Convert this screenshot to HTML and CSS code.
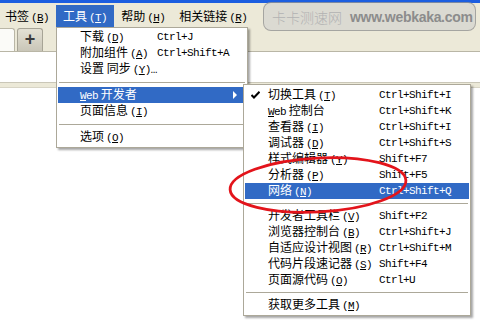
FILE: index.html
```html
<!DOCTYPE html>
<html>
<head>
    <meta charset="utf-8">
    <title>工具 - Web 开发者 - 网络</title>
    <link rel="stylesheet" href="styles.css">
</head>
<body>
    <div class="window">
        <div class="titlebar"></div>
        <div class="menubar">
            <span class="menubar__item">书签<span class="key">(<u>B</u>)</span></span>
            <span class="menubar__item menubar__item--open">工具<span class="key">(<u>T</u>)</span></span>
            <span class="menubar__item">帮助<span class="key">(<u>H</u>)</span></span>
            <span class="menubar__item">相关链接<span class="key">(<u>R</u>)</span></span>
        </div>
        <div class="tabbar">
            <div class="tab"></div>
            <div class="newtab">+</div>
        </div>
        <div class="navbar"></div>
        <div class="toolbar-edge"></div>
        <div class="content"></div>

        <div class="watermark">
            <span class="watermark__cn">卡卡测速网</span>
            <span class="watermark__url">www.webkaka.com</span>
        </div>

        <ul class="menu menu--tools">
            <li class="menu__row"><span class="menu__label">下载<span class="key">(<u>D</u>)</span></span><span class="menu__accel">Ctrl+J</span></li>
            <li class="menu__row"><span class="menu__label">附加组件<span class="key">(<u>A</u>)</span></span><span class="menu__accel">Ctrl+Shift+A</span></li>
            <li class="menu__row"><span class="menu__label menu__label--wide">设置 同步<span class="key">(<u>Y</u>)…</span></span></li>
            <li class="menu__sep"></li>
            <li class="menu__row menu__row--active"><span class="menu__label"><span class="key key--lead"><u>W</u>eb</span> 开发者</span><span class="menu__arrow"></span></li>
            <li class="menu__row"><span class="menu__label">页面信息<span class="key">(<u>I</u>)</span></span></li>
            <li class="menu__sep"></li>
            <li class="menu__row"><span class="menu__label">选项<span class="key">(<u>O</u>)</span></span></li>
        </ul>

        <ul class="menu menu--dev">
            <li class="menu__row"><span class="menu__check"><svg width="9" height="8" viewBox="0 0 9 8"><path d="M0.5 4 L3 6.5 L8.5 0.8" fill="none" stroke="#000" stroke-width="2"/></svg></span><span class="menu__label">切换工具<span class="key">(<u>T</u>)</span></span><span class="menu__accel">Ctrl+Shift+I</span></li>
            <li class="menu__row"><span class="menu__label"><span class="key key--lead"><u>W</u>eb</span> 控制台</span><span class="menu__accel">Ctrl+Shift+K</span></li>
            <li class="menu__row"><span class="menu__label">查看器<span class="key">(<u>I</u>)</span></span><span class="menu__accel">Ctrl+Shift+I</span></li>
            <li class="menu__row"><span class="menu__label">调试器<span class="key">(<u>D</u>)</span></span><span class="menu__accel">Ctrl+Shift+S</span></li>
            <li class="menu__row"><span class="menu__label">样式编辑器<span class="key">(<u>Y</u>)</span></span><span class="menu__accel">Shift+F7</span></li>
            <li class="menu__row"><span class="menu__label">分析器<span class="key">(<u>P</u>)</span></span><span class="menu__accel">Shift+F5</span></li>
            <li class="menu__row menu__row--active"><span class="menu__label">网络<span class="key">(<u>N</u>)</span></span><span class="menu__accel">Ctrl+Shift+Q</span></li>
            <li class="menu__sep"></li>
            <li class="menu__row"><span class="menu__label">开发者工具栏<span class="key">(<u>V</u>)</span></span><span class="menu__accel">Shift+F2</span></li>
            <li class="menu__row"><span class="menu__label">浏览器控制台<span class="key">(<u>B</u>)</span></span><span class="menu__accel">Ctrl+Shift+J</span></li>
            <li class="menu__row"><span class="menu__label">自适应设计视图<span class="key">(<u>R</u>)</span></span><span class="menu__accel">Ctrl+Shift+M</span></li>
            <li class="menu__row"><span class="menu__label">代码片段速记器<span class="key">(<u>S</u>)</span></span><span class="menu__accel">Shift+F4</span></li>
            <li class="menu__row"><span class="menu__label">页面源代码<span class="key">(<u>O</u>)</span></span><span class="menu__accel">Ctrl+U</span></li>
            <li class="menu__sep"></li>
            <li class="menu__row"><span class="menu__label menu__label--wide">获取更多工具<span class="key">(<u>M</u>)</span></span></li>
        </ul>

        <svg class="mark" width="480" height="323" viewBox="0 0 480 323">
            <ellipse cx="318" cy="185" rx="88" ry="27" transform="rotate(-3 318 185)" fill="none" stroke="#e3141b" stroke-width="2.8"/>
        </svg>
    </div>
</body>
</html>
```

FILE: styles.css
```css
* {
    box-sizing: border-box;
}

html, body {
    margin: 0;
    padding: 0;
}

body {
    width: 480px;
    height: 323px;
    overflow: hidden;
    background: #fff;
    font: 12px/16px "Noto Sans CJK SC", "Noto Sans", sans-serif;
    color: #000;
}

.window {
    position: relative;
    display: flex;
    flex-direction: column;
    height: 323px;
}

.titlebar {
    height: 3px;
    background: #1c5ee0;
}

.menubar {
    display: flex;
    align-items: flex-end;
    height: 24px;
    background: #ece9d8;
}

.menubar__item {
    height: 22px;
    padding: 0 7px;
    line-height: 21px;
    white-space: nowrap;
}

.menubar__item:first-child {
    margin-left: -2px;
}

.menubar__item--open {
    background: #316ac5;
    color: #fff;
}

.key {
    margin-left: 2px;
    font-family: "Liberation Mono", monospace;
    font-size: 11px;
    letter-spacing: -0.6px;
}

.key--lead {
    margin-left: 0;
}

.tabbar {
    display: flex;
    align-items: flex-end;
    gap: 2px;
    height: 25px;
    background: #ece9d8;
    border-bottom: 1px solid #b9b6a6;
}

.tab {
    width: 15px;
    height: 23px;
    background: #fbfbf8;
    border: 1px solid #b9b6a6;
    border-left: 0;
    border-bottom: 0;
    border-radius: 0 3px 0 0;
}

.newtab {
    width: 26px;
    height: 23px;
    background: linear-gradient(#e4e1d4, #c9c6b8);
    border: 1px solid #a7a496;
    border-bottom: 0;
    border-radius: 3px 3px 0 0;
    color: #3a3a3a;
    font: bold 18px/21px "Liberation Sans", sans-serif;
    text-align: center;
}

.navbar {
    height: 30px;
    background: #fff;
}

.toolbar-edge {
    height: 6px;
    background: #ece9d8;
    border-top: 1px solid #cac7b8;
    border-bottom: 1px solid #d8d5c6;
}

.content {
    flex: 1;
    background: #fff;
}

/* watermark over the title area */
.watermark {
    position: absolute;
    top: 2px;
    left: 263px;
    width: 213px;
    height: 29px;
    display: flex;
    align-items: center;
    gap: 8px;
    padding-left: 8px;
    border: 1px solid rgba(120, 120, 120, 0.55);
    border-radius: 8px;
    background: rgba(205, 205, 205, 0.55);
    white-space: nowrap;
}

.watermark__cn {
    color: #b2b2b2;
    font: 14px/1 "Noto Sans CJK SC", sans-serif;
    font-weight: 300;
}

.watermark__url {
    color: #8c8c8c;
    font: bold 14px/1 "Liberation Sans", sans-serif;
    letter-spacing: -0.3px;
}

/* popup menus */
.menu {
    position: absolute;
    margin: 0;
    padding: 1px 1px 2px;
    list-style: none;
    background: #fff;
    border: 1px solid #aca899;
    box-shadow: 2px 2px 2px rgba(0, 0, 0, 0.35);
}

.menu--tools {
    top: 27px;
    left: 56px;
    width: 192px;
}

.menu--dev {
    top: 84px;
    left: 243px;
    width: 228px;
    padding-top: 2px;
}

.menu__row {
    position: relative;
    display: flex;
    align-items: center;
    height: 16px;
    white-space: nowrap;
}

.menu--tools .menu__row {
    padding-left: 22px;
}

.menu--dev .menu__row {
    padding-left: 23px;
}

.menu__row--active {
    background: #316ac5;
    color: #fff;
}

.menu--tools .menu__label {
    width: 77px;
}

.menu--dev .menu__label {
    width: 111px;
}

.menu .menu__label--wide {
    width: auto;
}

.menu__accel {
    font-family: "Liberation Mono", monospace;
    font-size: 11px;
    letter-spacing: -0.6px;
}

.menu__sep {
    height: 10px;
    margin: 0 1px;
    background: linear-gradient(#aca899, #aca899) center / 100% 1px no-repeat;
}

.menu--dev .menu__sep {
    height: 9px;
}

.menu__arrow {
    position: absolute;
    right: 9px;
    top: 4px;
    border-left: 4px solid #fff;
    border-top: 4px solid transparent;
    border-bottom: 4px solid transparent;
}

.menu__check {
    position: absolute;
    left: 6px;
    top: 4px;
    line-height: 0;
}

.mark {
    position: absolute;
    top: 0;
    left: 0;
    pointer-events: none;
}
```
